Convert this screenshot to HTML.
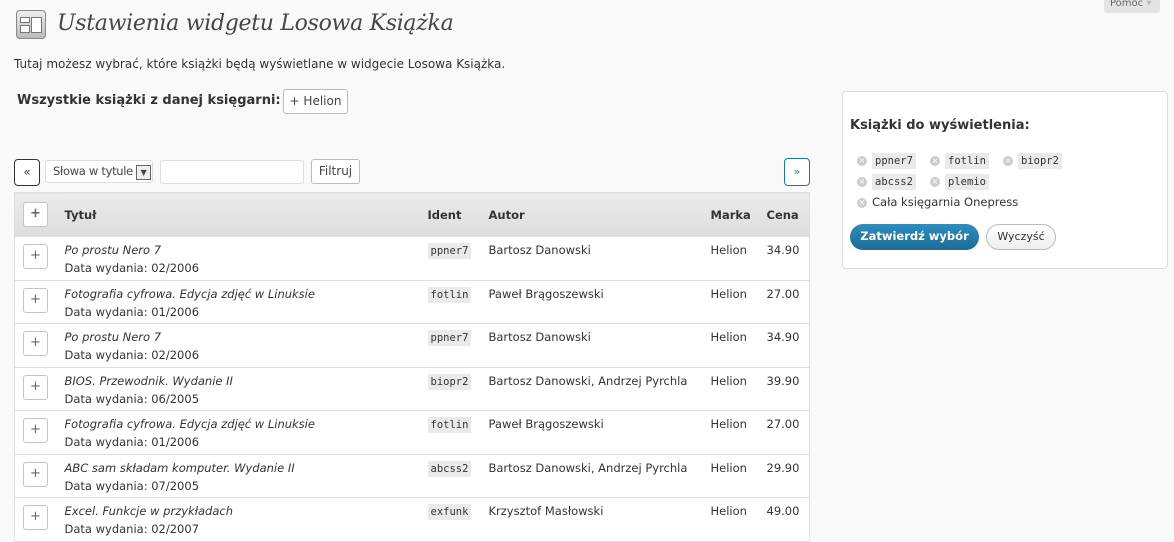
<!DOCTYPE html>
<html><head><meta charset="utf-8"><style>
*{box-sizing:border-box;margin:0;padding:0}
body{width:1174px;height:533px;overflow:hidden;background:#f9f9f9;font-family:"DejaVu Sans",Verdana,sans-serif;font-size:11.5px;color:#333;position:relative}
.abs{position:absolute}
code{font-family:"DejaVu Sans Mono","Liberation Mono",monospace;font-size:10.5px;background:#eaeaea;padding:2px 3px;color:#333}
.btn{position:absolute;background:#fff;border:1px solid #bbb;border-radius:3px;text-align:center;color:#444}
table{border-collapse:collapse;width:796px;position:absolute;left:14px;top:192px;background:#fff;border:1px solid #dfdfdf}
th{height:44px;background:linear-gradient(#ececec,#dcdcdc);text-align:left;font-weight:bold;color:#333;font-size:11.5px}
td{height:43.5px;border-top:1px solid #dfdfdf;vertical-align:top;padding-top:4px;line-height:18px}
.pl{display:inline-block;width:25px;height:25px;border:1px solid #c4c4c4;border-radius:3px;background:#fff;text-align:center;line-height:22px;font-size:13px;color:#666;margin-left:8px}
td .pl{margin-top:3px}
.x{display:inline-block;width:10px;height:10px;border-radius:50%;background:#ccc;color:#fff;font-size:8px;line-height:10px;text-align:center;margin-right:5px;vertical-align:middle}
</style></head><body>
<div class="abs" style="left:16px;top:10px;width:30px;height:29px;border:1px solid #888;border-radius:4px;background:linear-gradient(#eee,#bbb)">
<div class="abs" style="left:3px;top:6px;width:10px;height:6px;border:1px solid #777;background:#fff"></div>
<div class="abs" style="left:3px;top:14px;width:10px;height:8px;border:1px solid #777;background:#fff"></div>
<div class="abs" style="left:14px;top:6px;width:11px;height:16px;border:1px solid #777;background:#fff"></div>
</div>
<div class="abs" style="left:57px;top:11px;font-family:'DejaVu Serif','Liberation Serif',serif;font-style:italic;font-size:22px;color:#464646;letter-spacing:-0.3px">Ustawienia widgetu Losowa Książka</div>
<div class="abs" style="left:1104px;top:-4px;width:56px;height:17px;background:#e4e4e4;border-radius:0 0 3px 3px;font-size:10px;color:#666;padding:2px 0 0 6px">Pomoc <span style="color:#bbb">▾</span></div>
<div class="abs" style="left:14px;top:57px;font-size:12px">Tutaj możesz wybrać, które książki będą wyświetlane w widgecie Losowa Książka.</div>
<div class="abs" style="left:17px;top:93px;font-weight:bold;font-size:13px">Wszystkie książki z danej księgarni:</div>
<div class="btn" style="left:283px;top:89px;width:65px;height:25px;line-height:23px;font-size:12px">+ Helion</div>

<div class="btn" style="left:14px;top:159px;width:26px;height:27px;line-height:24px;border-color:#333;border-radius:4px;font-size:12px">«</div>
<div class="btn" style="left:45px;top:160px;width:108px;height:23px;line-height:21px;text-align:left;padding-left:7px;border-color:#ddd;font-size:11.5px;letter-spacing:-0.3px;overflow:hidden">Słowa w tytule<span class="abs" style="left:90px;top:4px;width:15px;height:15px;border:1px solid #666;background:#eee;font-size:8px;line-height:13px;text-align:center">▼</span></div>
<div class="btn" style="left:160px;top:160px;width:144px;height:24px;border-color:#ddd"></div>
<div class="btn" style="left:311px;top:159px;width:49px;height:25px;line-height:23px;font-size:12px">Filtruj</div>
<div class="btn" style="left:784px;top:158px;width:26px;height:28px;line-height:25px;border-color:#21759b;border-radius:4px;font-size:11px;color:#21759b">»</div>

<table>
<tr><th style="width:50px"><span class="pl">+</span></th><th style="width:363px">Tytuł</th><th style="width:61px">Ident</th><th style="width:222px">Autor</th><th style="width:56px">Marka</th><th>Cena</th></tr>
<tr><td><span class="pl">+</span></td><td><i>Po prostu Nero 7</i><br>Data wydania: 02/2006</td><td><code>ppner7</code></td><td>Bartosz Danowski</td><td>Helion</td><td>34.90</td></tr>
<tr><td><span class="pl">+</span></td><td><i>Fotografia cyfrowa. Edycja zdjęć w Linuksie</i><br>Data wydania: 01/2006</td><td><code>fotlin</code></td><td>Paweł Brągoszewski</td><td>Helion</td><td>27.00</td></tr>
<tr><td><span class="pl">+</span></td><td><i>Po prostu Nero 7</i><br>Data wydania: 02/2006</td><td><code>ppner7</code></td><td>Bartosz Danowski</td><td>Helion</td><td>34.90</td></tr>
<tr><td><span class="pl">+</span></td><td><i>BIOS. Przewodnik. Wydanie II</i><br>Data wydania: 06/2005</td><td><code>biopr2</code></td><td>Bartosz Danowski, Andrzej Pyrchla</td><td>Helion</td><td>39.90</td></tr>
<tr><td><span class="pl">+</span></td><td><i>Fotografia cyfrowa. Edycja zdjęć w Linuksie</i><br>Data wydania: 01/2006</td><td><code>fotlin</code></td><td>Paweł Brągoszewski</td><td>Helion</td><td>27.00</td></tr>
<tr><td><span class="pl">+</span></td><td><i>ABC sam składam komputer. Wydanie II</i><br>Data wydania: 07/2005</td><td><code>abcss2</code></td><td>Bartosz Danowski, Andrzej Pyrchla</td><td>Helion</td><td>29.90</td></tr>
<tr><td><span class="pl">+</span></td><td><i>Excel. Funkcje w przykładach</i><br>Data wydania: 02/2007</td><td><code>exfunk</code></td><td>Krzysztof Masłowski</td><td>Helion</td><td>49.00</td></tr>
</table>

<div class="abs" style="left:842px;top:91px;width:326px;height:178px;background:#fff;border:1px solid #ddd;border-radius:4px">
<div class="abs" style="left:7px;top:26px;font-weight:bold;font-size:13px">Książki do wyświetlenia:</div>
<div class="abs" style="left:14px;top:61px"><span class="x">×</span><code>ppner7</code></div>
<div class="abs" style="left:87px;top:61px"><span class="x">×</span><code>fotlin</code></div>
<div class="abs" style="left:160px;top:61px"><span class="x">×</span><code>biopr2</code></div>
<div class="abs" style="left:14px;top:82px"><span class="x">×</span><code>abcss2</code></div>
<div class="abs" style="left:87px;top:82px"><span class="x">×</span><code>plemio</code></div>
<div class="abs" style="left:14px;top:103px"><span class="x">×</span>Cała księgarnia Onepress</div>
<div class="abs" style="left:7px;top:132px;width:129px;height:26px;border-radius:13px;background:linear-gradient(#2e8dbd,#1e6b93);color:#fff;font-weight:bold;text-align:center;line-height:25px;font-size:11.5px">Zatwierdź wybór</div>
<div class="abs" style="left:143px;top:132px;width:70px;height:26px;border-radius:13px;border:1px solid #bbb;background:linear-gradient(#fff,#eee);text-align:center;line-height:24px;font-size:11px">Wyczyść</div>
</div>
</body></html>
